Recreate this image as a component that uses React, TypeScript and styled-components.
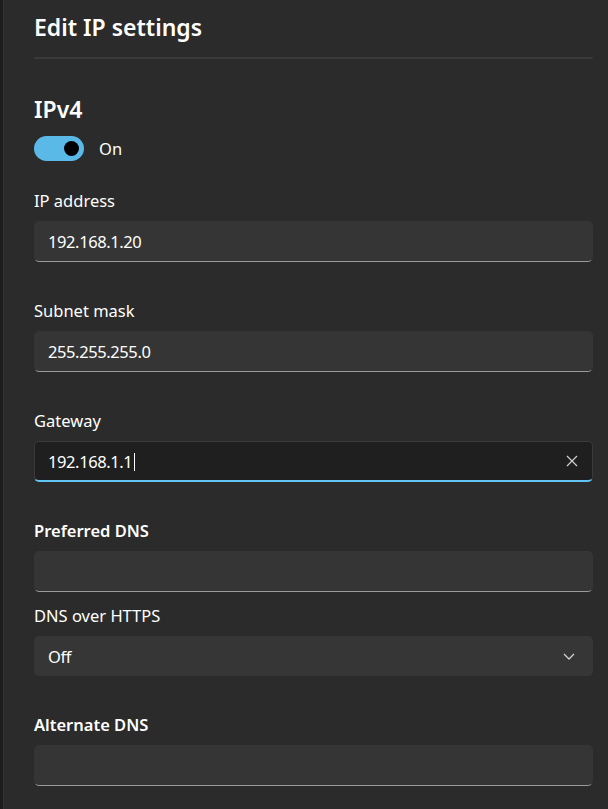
import React from "react";
import styled, { createGlobalStyle } from "styled-components";

const Global = createGlobalStyle`
  html, body { margin: 0; padding: 0; background: #2b2b2b; }
  body { font-family: "Noto Sans", "Open Sans", sans-serif; color: #ffffff; }
  * { box-sizing: border-box; }
`;

const Frame = styled.div`
  display: flex;
  width: 608px;
  height: 809px;
  overflow: hidden;
  background: #2b2b2b;
`;

const Edge = styled.div`
  width: 4px;
  flex: none;
  background: #1d1d1d;
  border-right: 1px solid #333333;
`;

const Panel = styled.div`
  flex: 1;
  display: flex;
  flex-direction: column;
  padding: 0 15px 0 30px;
`;

const Title = styled.h1`
  margin: 11px 0 0;
  font-size: 23px;
  line-height: 32px;
  font-weight: 600;
`;

const Divider = styled.div`
  margin-top: 14px;
  height: 2px;
  background: #3a3a3a;
  border-radius: 1px;
`;

const Heading = styled.h2`
  margin: 34px 0 0;
  font-size: 23px;
  line-height: 32px;
  font-weight: 600;
`;

const ToggleRow = styled.div`
  margin-top: 11px;
  display: flex;
  align-items: center;
  gap: 15px;
  height: 25px;
  font-size: 16.5px;
`;

const Track = styled.div`
  width: 50px;
  height: 25px;
  border-radius: 13px;
  background: #5bb9e8;
  display: flex;
  align-items: center;
  justify-content: flex-end;
  padding-right: 5px;
`;

const Knob = styled.div`
  width: 15px;
  height: 15px;
  border-radius: 50%;
  background: #000000;
`;

const Field = styled.div<{ $gap: number }>`
  margin-top: ${(p) => p.$gap}px;
  display: flex;
  flex-direction: column;
  gap: 8px;
`;

const Label = styled.div<{ $strong?: boolean }>`
  font-size: 16.5px;
  line-height: 24px;
  font-weight: ${(p) => (p.$strong ? 600 : 400)};
`;

const Input = styled.div<{ $focus?: boolean }>`
  height: 41px;
  border-radius: 5px;
  display: flex;
  align-items: center;
  padding: 0 14px 0 13px;
  font-size: 16.5px;
  background: ${(p) => (p.$focus ? "#1f1f1f" : "#353535")};
  border: 1px solid ${(p) => (p.$focus ? "#3a3a3a" : "#353535")};
  border-bottom: ${(p) => (p.$focus ? "2px solid #5fc4f2" : "1px solid #9a9a9a")};
`;

const Value = styled.span`
  flex: 1;
  letter-spacing: -0.4px;
`;

const Caret = styled.span`
  display: inline-block;
  width: 1px;
  height: 18px;
  background: #ffffff;
  vertical-align: -3px;
  margin-left: 2px;
`;

const Select = styled.div`
  height: 40px;
  border-radius: 5px;
  background: #363636;
  display: flex;
  align-items: center;
  padding: 0 18px 0 14px;
  font-size: 16.5px;
`;

const IconBox = styled.span`
  display: flex;
  align-items: center;
  color: #d0d0d0;
`;

export default function App() {
  return (
    <>
      <Global />
      <Frame>
        <Edge />
        <Panel>
          <Title>Edit IP settings</Title>
          <Divider />
          <Heading>IPv4</Heading>
          <ToggleRow>
            <Track>
              <Knob />
            </Track>
            <span>On</span>
          </ToggleRow>

          <Field $gap={28}>
            <Label>IP address</Label>
            <Input>
              <Value>192.168.1.20</Value>
            </Input>
          </Field>

          <Field $gap={37}>
            <Label>Subnet mask</Label>
            <Input>
              <Value>255.255.255.0</Value>
            </Input>
          </Field>

          <Field $gap={37}>
            <Label>Gateway</Label>
            <Input $focus>
              <Value>
                192.168.1.1
                <Caret />
              </Value>
              <IconBox>
                <svg width="12" height="12" viewBox="0 0 12 12">
                  <path d="M1 1L11 11M11 1L1 11" stroke="currentColor" strokeWidth="1.2" fill="none" />
                </svg>
              </IconBox>
            </Input>
          </Field>

          <Field $gap={37}>
            <Label $strong>Preferred DNS</Label>
            <Input />
          </Field>

          <Field $gap={12}>
            <Label>DNS over HTTPS</Label>
            <Select>
              <Value>Off</Value>
              <IconBox>
                <svg width="12" height="7" viewBox="0 0 12 7">
                  <path d="M1 1L6 6L11 1" stroke="currentColor" strokeWidth="1.3" fill="none" />
                </svg>
              </IconBox>
            </Select>
          </Field>

          <Field $gap={37}>
            <Label $strong>Alternate DNS</Label>
            <Input />
          </Field>
        </Panel>
      </Frame>
    </>
  );
}
